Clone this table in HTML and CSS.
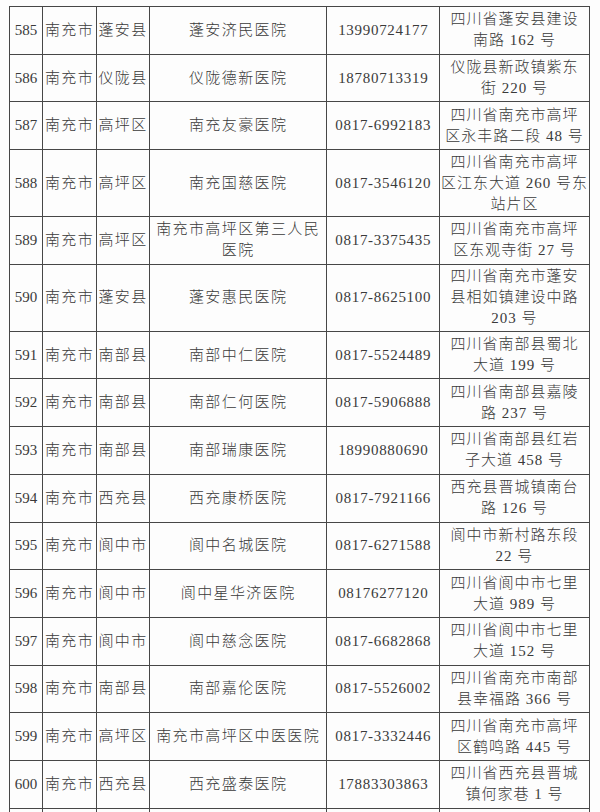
FILE: index.html
```html
<!DOCTYPE html>
<html lang="zh-CN">
<head>
<meta charset="utf-8">
<title>南充市医院名单</title>
<link rel="stylesheet" href="styles.css">
</head>
<body>
<div class="page">
<table class="list">
<colgroup>
<col class="c-no"><col class="c-city"><col class="c-county"><col class="c-name"><col class="c-tel"><col class="c-addr">
</colgroup>
<tbody>
<tr class="r2"><td class="no">585</td><td>南充市</td><td>蓬安县</td><td>蓬安济民医院</td><td class="tel">13990724177</td><td class="addr">四川省蓬安县建设<br>南路 162 号</td></tr>
<tr class="r2"><td class="no">586</td><td>南充市</td><td>仪陇县</td><td>仪陇德新医院</td><td class="tel">18780713319</td><td class="addr">仪陇县新政镇紫东<br>街 220 号</td></tr>
<tr class="r2"><td class="no">587</td><td>南充市</td><td>高坪区</td><td>南充友豪医院</td><td class="tel">0817-6992183</td><td class="addr">四川省南充市高坪<br>区永丰路二段 48 号</td></tr>
<tr class="r3"><td class="no">588</td><td>南充市</td><td>高坪区</td><td>南充国慈医院</td><td class="tel">0817-3546120</td><td class="addr">四川省南充市高坪<br>区江东大道 260 号东<br>站片区</td></tr>
<tr class="r2"><td class="no">589</td><td>南充市</td><td>高坪区</td><td class="name2">南充市高坪区第三人民<br>医院</td><td class="tel">0817-3375435</td><td class="addr">四川省南充市高坪<br>区东观寺街 27 号</td></tr>
<tr class="r3"><td class="no">590</td><td>南充市</td><td>蓬安县</td><td>蓬安惠民医院</td><td class="tel">0817-8625100</td><td class="addr">四川省南充市蓬安<br>县相如镇建设中路<br>203 号</td></tr>
<tr class="r2"><td class="no">591</td><td>南充市</td><td>南部县</td><td>南部中仁医院</td><td class="tel">0817-5524489</td><td class="addr">四川省南部县蜀北<br>大道 199 号</td></tr>
<tr class="r2"><td class="no">592</td><td>南充市</td><td>南部县</td><td>南部仁何医院</td><td class="tel">0817-5906888</td><td class="addr">四川省南部县嘉陵<br>路 237 号</td></tr>
<tr class="r2"><td class="no">593</td><td>南充市</td><td>南部县</td><td>南部瑞康医院</td><td class="tel">18990880690</td><td class="addr">四川省南部县红岩<br>子大道 458 号</td></tr>
<tr class="r2"><td class="no">594</td><td>南充市</td><td>西充县</td><td>西充康桥医院</td><td class="tel">0817-7921166</td><td class="addr">西充县晋城镇南台<br>路 126 号</td></tr>
<tr class="r2"><td class="no">595</td><td>南充市</td><td>阆中市</td><td>阆中名城医院</td><td class="tel">0817-6271588</td><td class="addr">阆中市新村路东段<br>22 号</td></tr>
<tr class="r2"><td class="no">596</td><td>南充市</td><td>阆中市</td><td>阆中星华济医院</td><td class="tel">08176277120</td><td class="addr">四川省阆中市七里<br>大道 989 号</td></tr>
<tr class="r2"><td class="no">597</td><td>南充市</td><td>阆中市</td><td>阆中慈念医院</td><td class="tel">0817-6682868</td><td class="addr">四川省阆中市七里<br>大道 152 号</td></tr>
<tr class="r2"><td class="no">598</td><td>南充市</td><td>南部县</td><td>南部嘉伦医院</td><td class="tel">0817-5526002</td><td class="addr">四川省南充市南部<br>县幸福路 366 号</td></tr>
<tr class="r2"><td class="no">599</td><td>南充市</td><td>高坪区</td><td>南充市高坪区中医医院</td><td class="tel">0817-3332446</td><td class="addr">四川省南充市高坪<br>区鹤鸣路 445 号</td></tr>
<tr class="r2"><td class="no">600</td><td>南充市</td><td>西充县</td><td>西充盛泰医院</td><td class="tel">17883303863</td><td class="addr">四川省西充县晋城<br>镇何家巷 1 号</td></tr>
<tr class="r2"><td class="no"></td><td></td><td></td><td></td><td class="tel"></td><td class="addr"></td></tr>
</tbody>
</table>
</div>
</body>
</html>
```

FILE: styles.css
```css
html, body {
  margin: 0;
  padding: 0;
  background: #fdfdfd;
}

.page {
  padding: 6px 0 0 9px;
  height: 812px;
  overflow: hidden;
  box-sizing: border-box;
}

.list {
  border-collapse: collapse;
  table-layout: fixed;
  width: 580.5px;
  font-family: "Liberation Serif", "Noto Sans CJK SC", serif;
  font-size: 15px;
  font-weight: 300;
  color: #3a3a3a;
}

.c-no { width: 33px; }
.c-city { width: 54px; }
.c-county { width: 53px; }
.c-name { width: 177px; }
.c-tel { width: 113px; }
.c-addr { width: 149px; }

.list td {
  border: 1.5px solid #474747;
  padding: 0;
  text-align: center;
  vertical-align: middle;
  line-height: 21px;
  letter-spacing: 1.4px;
  white-space: nowrap;
  overflow: visible;
}

.list tr.r2 td { height: 46.7px; }
.list tr.r3 td { height: 66px; }

.list td.no {
  letter-spacing: 0;
}

.list td.tel {
  letter-spacing: 0.7px;
}

.list td.addr {
  letter-spacing: 1px;
}
```
